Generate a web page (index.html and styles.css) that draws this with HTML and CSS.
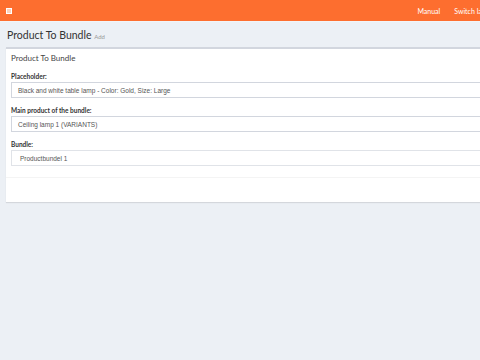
FILE: index.html
```html
<!DOCTYPE html>
<html lang="en">
<head>
    <meta charset="UTF-8">
    <title>Product To Bundle</title>
    <link rel="stylesheet" href="styles.css">
</head>
<body>

    <!-- Top bar -->
    <header class="topbar">
        <span class="menu-toggle"></span>
        <nav class="topnav">
            <a href="#">Manual</a>
            <a href="#">Switch language</a>
        </nav>
    </header>

    <!-- Page title -->
    <section class="content-header">
        <h1>Product To Bundle <small>Add</small></h1>
    </section>

    <!-- Form box -->
    <section class="content">
        <div class="box">
            <div class="box-header">Product To Bundle</div>
            <div class="box-body">
                <div class="form-group">
                    <label>Placeholder:</label>
                    <div class="form-control">Black and white table lamp - Color: Gold, Size: Large</div>
                </div>
                <div class="form-group">
                    <label>Main product of the bundle:</label>
                    <div class="form-control">Ceiling lamp 1 (VARIANTS)</div>
                </div>
                <div class="form-group">
                    <label>Bundle:</label>
                    <div class="form-control select">Productbundel 1</div>
                </div>
            </div>
            <div class="box-footer"></div>
        </div>
    </section>

</body>
</html>
```

FILE: styles.css
```css
body {
    margin: 0;
    background-color: #ecf0f5;
    font-family: Lato, "Open Sans", sans-serif;
    color: #333;
    width: 480px;
    height: 360px;
    overflow: hidden;
}

/* Top bar */
.topbar {
    height: 22px;
    background-color: #fd6e2f;
    display: flex;
    align-items: center;
    justify-content: space-between;
    padding-left: 6px;
    border-bottom: 1px solid #f2f4f7;
    box-sizing: border-box;
    width: 540px;
}

.menu-toggle {
    width: 4px;
    height: 4px;
    background-color: #fbd2bd;
    border: 0.5px solid #fff;
}

.topnav {
    display: flex;
    gap: 14px;
    margin-right: 36px;
}

.topnav a {
    color: #fff;
    text-decoration: none;
    font-size: 7px;
}

/* Title */
.content-header {
    padding: 7px 7px 0;
    height: 12px;
}

.content-header h1 {
    margin: 0;
    font-size: 10.5px;
    line-height: 12px;
    font-weight: normal;
    color: #333;
}

.content-header small {
    font-size: 6px;
    color: #999;
}

/* Box */
.content {
    padding: 6px 0 0 6px;
}

.box {
    width: 520px;
    background-color: #fff;
    border-top: 2px solid #d2d6de;
    box-shadow: 0 1px 1px rgba(0, 0, 0, 0.1);
    height: 153px;
    display: flex;
    flex-direction: column;
}

.box-header {
    font-size: 8px;
    line-height: 10px;
    color: #444;
    padding: 4px 5px 0;
    height: 18px;
}

.box-body {
    padding: 0 5px;
}

.form-group {
    margin-bottom: 7px;
}

.form-group label {
    display: block;
    font-size: 6.5px;
    line-height: 8px;
    font-weight: bold;
    color: #333;
    padding-top: 2px;
    margin-bottom: 1px;
}

.form-control {
    height: 16px;
    box-sizing: border-box;
    border: 1px solid #d2d6de;
    font-family: "Liberation Sans", Arial, sans-serif;
    font-size: 6.5px;
    color: #555;
    padding: 3px 6px;
    line-height: 9px;
}

.form-control.select {
    padding-left: 8px;
    border-color: #e0e3e8;
}

.box-footer {
    border-top: 1px solid #f4f4f4;
    margin-top: 4px;
    flex: 1;
}
```
